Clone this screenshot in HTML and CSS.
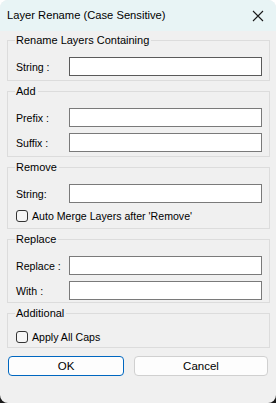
FILE: index.html
```html
<!DOCTYPE html>
<html lang="en">

<head>
    <meta charset="UTF-8">
    <meta name="viewport" content="width=device-width,initial-scale=1.0">
    <title>Layer Rename (Case Sensitive)</title>
    <link rel="stylesheet" href="styles.css">
</head>

<body>
    <div class="window">
        <div class="titlebar">
            <span class="caption">Layer Rename (Case Sensitive)</span>
            <svg class="close" width="12" height="12" viewBox="0 0 12 12">
                <path d="M1 1 L11 11 M11 1 L1 11" stroke="#1a1a1a" stroke-width="1.1" fill="none" />
            </svg>
        </div>
        <div class="content">
            <div class="group">
                <span class="legend">Rename Layers Containing</span>
                <div class="row">
                    <label for="contains">String :</label>
                    <input type="text" id="contains" class="focused">
                </div>
            </div>
            <div class="group">
                <span class="legend">Add</span>
                <div class="row">
                    <label for="prefix">Prefix :</label>
                    <input type="text" id="prefix">
                </div>
                <div class="row">
                    <label for="suffix">Suffix :</label>
                    <input type="text" id="suffix">
                </div>
            </div>
            <div class="group group-tall">
                <span class="legend">Remove</span>
                <div class="row">
                    <label for="remove">String:</label>
                    <input type="text" id="remove">
                </div>
                <label class="check">
                    <span class="box"></span>
                    Auto Merge Layers after 'Remove'
                </label>
            </div>
            <div class="group group-tight">
                <span class="legend">Replace</span>
                <div class="row">
                    <label for="find">Replace :</label>
                    <input type="text" id="find">
                </div>
                <div class="row">
                    <label for="with">With :</label>
                    <input type="text" id="with">
                </div>
            </div>
            <div class="group">
                <span class="legend">Additional</span>
                <label class="check">
                    <span class="box"></span>
                    Apply All Caps
                </label>
            </div>
            <div class="buttons">
                <button type="button" class="btn btn-ok">OK</button>
                <button type="button" class="btn btn-cancel">Cancel</button>
            </div>
        </div>
    </div>
</body>

</html>
```

FILE: styles.css
```css
* {
    margin: 0;
    padding: 0;
    box-sizing: border-box;
}

html,
body {
    width: 276px;
    height: 403px;
    overflow: hidden;
}

body {
    background: linear-gradient(#ffffff 50%, #1c1c1c 50%);
    font-family: "Segoe UI", "Liberation Sans", Arial, sans-serif;
    font-size: 10.6px;
    color: #000;
}

.window {
    height: 403px;
    background-color: #f0f0f0;
    border-radius: 8px;
    overflow: hidden;
    display: flex;
    flex-direction: column;
}

.titlebar {
    height: 31px;
    background-color: #e8f4f5;
    display: flex;
    align-items: center;
    justify-content: space-between;
    padding: 0 12px 0 7px;
    flex-shrink: 0;
}

.caption {
    font-size: 11.2px;
    margin-top: -1px;
}

.close {
    display: block;
}

.content {
    padding: 9px 6px 0 7px;
    display: flex;
    flex-direction: column;
    gap: 10px;
}

.group {
    position: relative;
    border: 1px solid #dcdcdc;
    padding: 16px 7px 4px 8px;
    display: flex;
    flex-direction: column;
    gap: 6px;
}

.group-tall {
    padding-bottom: 6px;
}

.group-tight {
    padding-bottom: 2px;
}

.legend {
    position: absolute;
    top: -8px;
    left: 7px;
    padding: 0 2px 0 1px;
    line-height: 15px;
    font-size: 11px;
    background-color: #f0f0f0;
}

.row {
    display: flex;
    align-items: center;
    height: 19px;
}

.row label {
    width: 53px;
    flex-shrink: 0;
}

.row input {
    flex: 1;
    height: 19px;
    border: 1px solid #7a7a7a;
    background-color: #fff;
    border-radius: 0;
    outline: none;
    font: inherit;
}

.row input.focused {
    border-color: #5a5a5a;
}

.check {
    display: flex;
    align-items: center;
    height: 13px;
    gap: 4px;
}

.box {
    width: 12px;
    height: 12px;
    border: 1px solid #333;
    border-radius: 3px;
    background-color: #f6f6f6;
}

.buttons {
    display: flex;
    gap: 10px;
    margin-top: -2px;
    padding: 0 2px 0 1px;
}

.btn {
    height: 20px;
    font: inherit;
    font-size: 11.5px;
    color: #000;
    background-color: #fdfdfd;
    border: 1px solid #d0d0d0;
    border-radius: 4px;
}

.btn-ok {
    width: 116px;
    border-color: #0067c0;
}

.btn-cancel {
    flex: 1;
}
```
